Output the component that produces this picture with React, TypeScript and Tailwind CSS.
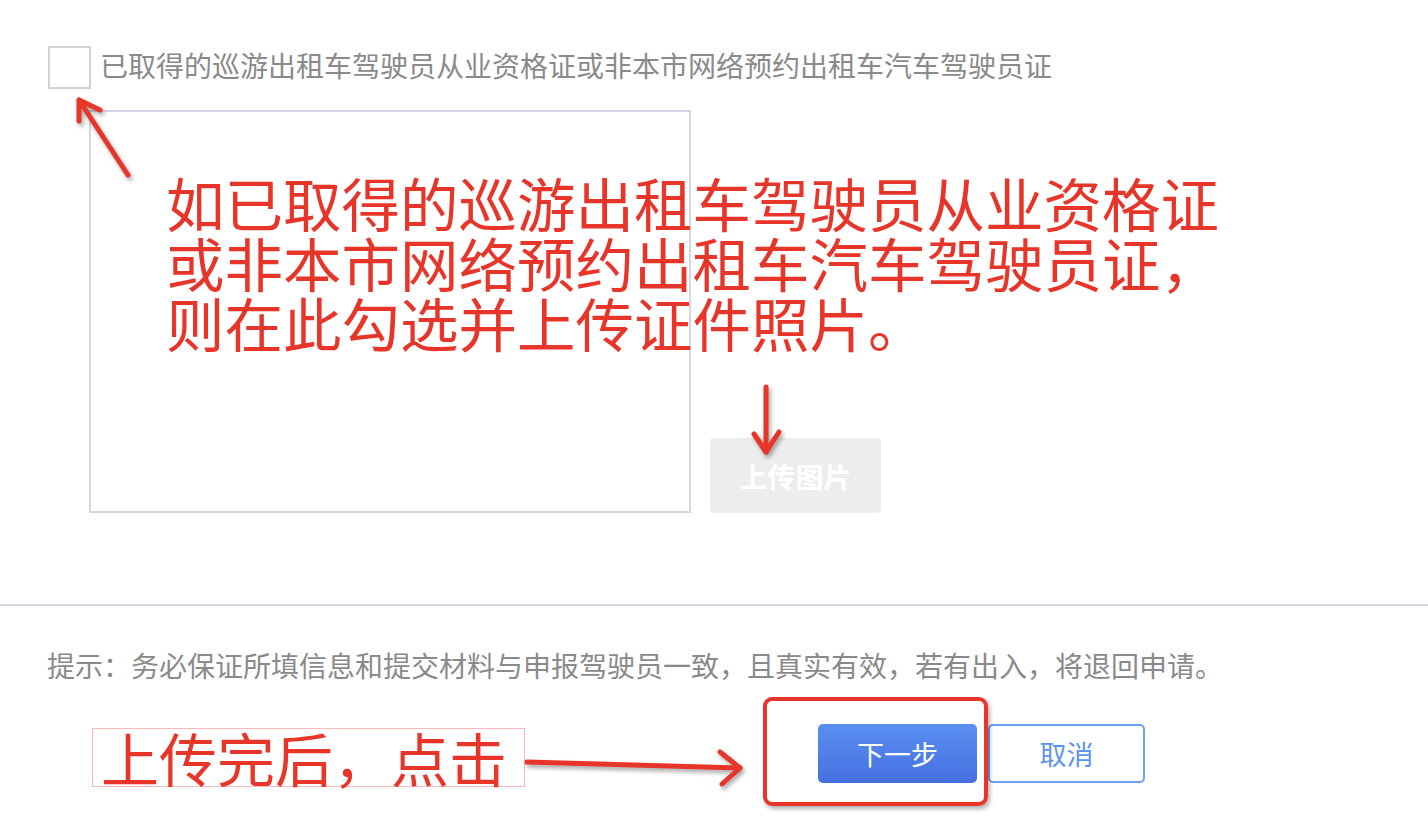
import React from "react";

const FONT = { fontFamily: '"Noto Sans CJK SC", "Noto Sans", sans-serif' };

export default function App() {
  return (
    <div className="relative w-[1428px] h-[834px] bg-white overflow-hidden" style={FONT}>
      {/* Checkbox row */}
      <div className="flex items-center pt-[46px] pl-[48px] gap-[9px]">
        <div className="w-[43px] h-[43px] border-2 border-[#d2d2d2] bg-white shrink-0" />
        <span className="text-[28px] leading-[32px] pb-[5px] text-[#8a8a8a] whitespace-nowrap">
          已取得的巡游出租车驾驶员从业资格证或非本市网络预约出租车汽车驾驶员证
        </span>
      </div>

      {/* Image area + upload */}
      <div className="flex items-end pt-[21px] pl-[89px] gap-[19px]">
        <div className="w-[602px] h-[403px] border-2 border-[#d6d5e5] bg-white" />
        <button className="w-[171px] h-[75px] rounded-[4px] bg-[#ededed] text-white text-[28px] font-semibold leading-none">
          上传图片
        </button>
      </div>

      {/* Divider */}
      <div className="mt-[91px] h-[2px] bg-[#d8d6e6] w-full" />

      {/* Hint */}
      <div className="pt-[41px] pl-[47px] text-[28px] leading-[36px] text-[#8a8a8a] whitespace-nowrap">
        提示：务必保证所填信息和提交材料与申报驾驶员一致，且真实有效，若有出入，将退回申请。
      </div>

      {/* Buttons */}
      <div className="flex pt-[41px] pl-[818px] gap-[11px]">
        <button className="w-[159px] h-[59px] rounded-[5px] bg-gradient-to-b from-[#5a8ef0] to-[#4670e0] text-white text-[27px] leading-none">
          下一步
        </button>
        <button className="w-[157px] h-[59px] rounded-[5px] border-2 border-[#6aa3f2] bg-white text-[#5b94ea] text-[27px] leading-none">
          取消
        </button>
      </div>

      {/* Annotation: big red text */}
      <div className="absolute left-[166px] top-[172px] text-[58.5px] leading-[60px] text-[#e8352a] whitespace-nowrap">
        <div>如已取得的巡游出租车驾驶员从业资格证</div>
        <div>或非本市网络预约出租车汽车驾驶员证，</div>
        <div>则在此勾选并上传证件照片。</div>
      </div>

      {/* Annotation: boxed text */}
      <div className="absolute left-[92px] top-[728px] w-[433px] h-[59px] border border-[#f6b9b9] pl-[8px] text-[58px] leading-[57px] text-[#e8352a] whitespace-nowrap">
        上传完后，点击
      </div>

      {/* Annotation: red rounded rect */}
      <div className="absolute left-[763px] top-[697px] w-[225px] h-[109px] border-[4px] border-[#e8352a] rounded-[9px] shadow-[2px_3px_4px_rgba(0,0,0,0.3)]" />

      {/* Arrows */}
      <svg
        className="absolute inset-0 pointer-events-none"
        width="1428"
        height="834"
        viewBox="0 0 1428 834"
        fill="none"
        stroke="#e8352a"
        strokeWidth="5"
        strokeLinecap="round"
        strokeLinejoin="round"
        style={{ filter: "drop-shadow(2px 3px 2px rgba(0,0,0,0.35))" }}
      >
        {/* up-left arrow to checkbox */}
        <path d="M128 175 L79 100" />
        <path d="M100 110 L79 100 L79 121" />
        {/* down arrow to upload */}
        <path d="M766 387 L766 452" />
        <path d="M754 434 L766 452 L779 432" />
        {/* right arrow to next */}
        <path d="M527 762 L740 768" />
        <path d="M720 752 L740 768 L722 784" />
      </svg>
    </div>
  );
}
